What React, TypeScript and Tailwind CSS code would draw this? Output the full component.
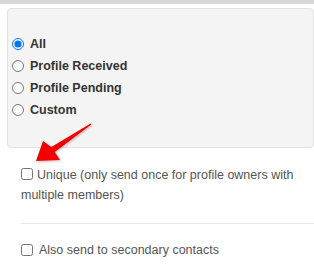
import React from "react";

const labels = ["All", "Profile Received", "Profile Pending", "Custom"];

export default function App() {
  return (
    <div className="relative w-[314px] h-[269px] overflow-hidden bg-white font-['Liberation_Sans',Arial,sans-serif] text-[12.5px]">
      <div className="h-[4px] bg-[#d8d8d8]" />
      <div className="pl-[7px] pt-[4px]">
        <div className="h-[140px] w-[307px] rounded-[4px] border border-[#e2e2e2] bg-[#f4f4f4] pl-[4px] pt-[24px]">
          {labels.map((l) => (
            <label key={l} className="flex h-[22px] items-center font-bold text-[#333]">
              <input
                type="radio"
                name="r"
                defaultChecked={l === "All"}
                className="m-0 h-[12px] w-[12px]"
              />
              <span className="ml-[6px]">{l}</span>
            </label>
          ))}
        </div>
      </div>
      <div className="pl-[21px] pt-[17px]">
        <label className="block leading-[20px] text-[#555]">
          <input type="checkbox" className="m-0 mr-[4px] h-[12px] w-[12px] align-[-1px]" />
          Unique (only send once for profile owners with multiple members)
        </label>
        <div className="mt-[18px] border-t border-[#e6e6e6]" />
        <label className="mt-[16px] flex h-[20px] items-center text-[#555]">
          <input type="checkbox" className="m-0 h-[12px] w-[12px]" />
          <span className="ml-[6px]">Also send to secondary contacts</span>
        </label>
      </div>
      <svg
        className="pointer-events-none absolute left-0 top-0"
        width="314"
        height="269"
        viewBox="0 0 314 269"
      >
        <defs>
          <filter id="sh" x="-20%" y="-20%" width="140%" height="140%">
            <feDropShadow dx="1" dy="1" stdDeviation="1" floodColor="#000" floodOpacity="0.25" />
          </filter>
        </defs>
        <polygon
          points="36,161 43,141 51.3,147 90.6,123.4 91.4,124.6 54.7,152 60,160"
          fill="#f20000"
          filter="url(#sh)"
        />
      </svg>
    </div>
  );
}
